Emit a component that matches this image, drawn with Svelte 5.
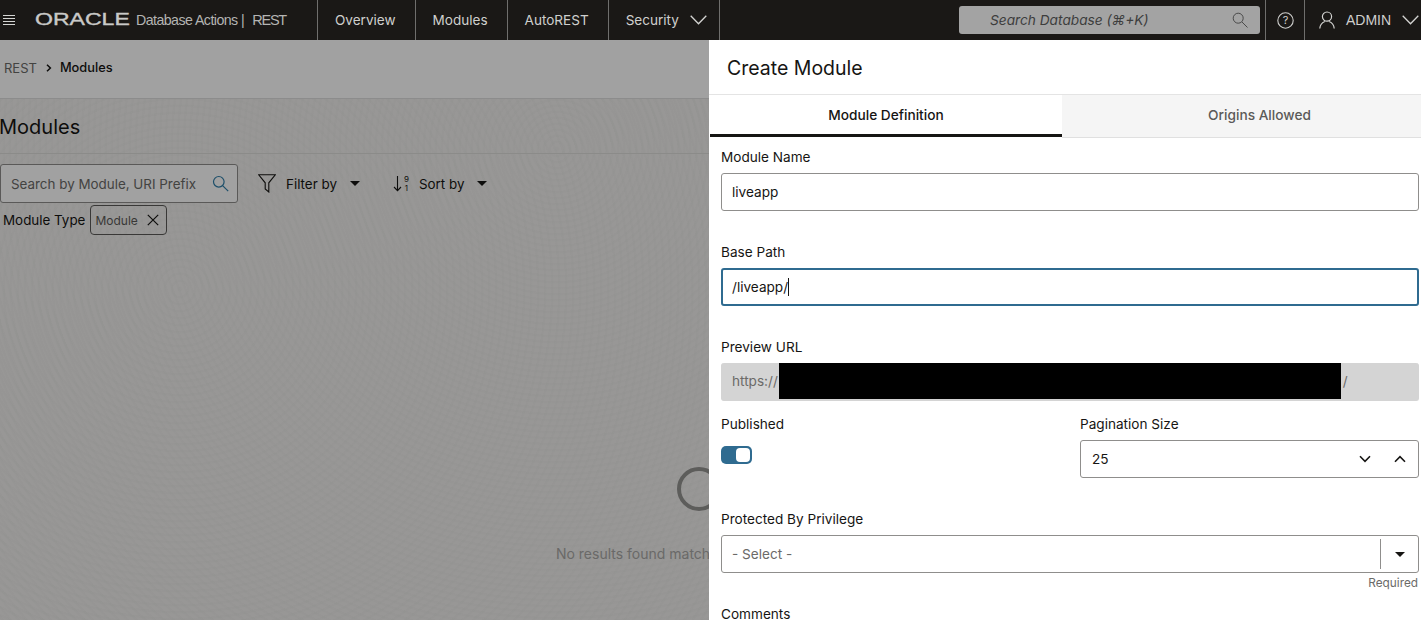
<script>
  const nav = ['Overview', 'Modules', 'AutoREST'];
</script>

<div class="app">
  <header class="topbar">
    <div class="brand">
      <svg class="burger" width="12" height="10" viewBox="0 0 12 10"><path d="M0 .5h12M0 3.5h12M0 6.5h12M0 9.5h12" stroke="#d4d4d2" stroke-width="1" /></svg>
      <span class="oracle">ORACLE</span>
      <span class="sub">Database Actions |</span>
      <span class="rest">REST</span>
    </div>
    <nav class="nav">
      {#each nav as item}
        <a class="navitem">{item}</a>
      {/each}
      <a class="navitem security">
        <span>Security</span>
        <svg width="17" height="10" viewBox="0 0 17 10"><path d="M.7.8 8.5 8.8 16.3.8" fill="none" stroke="#d4d4d2" stroke-width="1.3" /></svg>
      </a>
    </nav>
    <div class="spacer"></div>
    <div class="dbsearch">
      <span>Search Database (⌘+K)</span>
      <svg width="16" height="16" viewBox="0 0 16 16"><circle cx="6.2" cy="6.2" r="5" fill="none" stroke="#4a4a4a" stroke-width="1" /><path d="m10 10 5.5 5.5" stroke="#4a4a4a" stroke-width="1" /></svg>
    </div>
    <div class="help">
      <svg width="17" height="17" viewBox="0 0 17 17"><circle cx="8.5" cy="8.5" r="7.7" fill="none" stroke="#cfcfcd" stroke-width="1.1" /><text x="8.5" y="12.2" text-anchor="middle" class="q">?</text></svg>
    </div>
    <div class="user">
      <svg width="16" height="18" viewBox="0 0 16 18"><circle cx="8" cy="5.6" r="4.6" fill="none" stroke="#d4d4d2" stroke-width="1.2" /><path d="M.8 17.5c.3-4 2.7-6 5-7M15.2 17.5c-.3-4-2.700-6-5-7" fill="none" stroke="#d4d4d2" stroke-width="1.2" /></svg>
      <span>ADMIN</span>
      <svg width="17" height="10" viewBox="0 0 17 10"><path d="M.7.8 8.5 8.8 16.3.8" fill="none" stroke="#d4d4d2" stroke-width="1.3" /></svg>
    </div>
  </header>

  <main class="stage">
    <section class="page">
      <div class="crumbs">
        <span class="crumb-root">REST</span>
        <svg width="6" height="8" viewBox="0 0 6 8"><path d="M1 .7 4.400 4 1 7.300" fill="none" stroke="#161513" stroke-width="1.500" /></svg>
        <span class="crumb-current">Modules</span>
      </div>
      <div class="content">
        <h1>Modules</h1>
        <div class="tools">
          <div class="search">
            <span>Search by Module, URI Prefix</span>
            <svg width="17" height="17" viewBox="0 0 17 17"><circle cx="6.800" cy="6.800" r="5.300" fill="none" stroke="#2f7da8" stroke-width="1.200" /><path d="m10.600 10.600 5.600 5.600" stroke="#2f7da8" stroke-width="1.200" /></svg>
          </div>
          <div class="tool filter">
            <svg width="18" height="19" viewBox="0 0 18 19"><path d="M.7.8h16.600l-6.500 8v9.200l-3.600-3v-6.200z" fill="none" stroke="#161513" stroke-width="1.100" /></svg>
            <span>Filter by</span>
            <i class="caret"></i>
          </div>
          <div class="tool sort">
            <svg width="17" height="17" viewBox="0 0 17 17"><path d="M4.500 1v14.500M1 12l3.500 3.700L8 12" fill="none" stroke="#161513" stroke-width="1.100" /><text x="13.500" y="7" text-anchor="middle" class="digit">9</text><text x="13.500" y="16" text-anchor="middle" class="digit">1</text></svg>
            <span>Sort by</span>
            <i class="caret"></i>
          </div>
        </div>
        <div class="applied">
          <span>Module Type</span>
          <div class="chip">
            <span>Module</span>
            <svg width="12" height="12" viewBox="0 0 12 12"><path d="m.8.800 10.400 10.400M11.200.800.800 11.200" stroke="#161513" stroke-width="1.200" /></svg>
          </div>
        </div>
        <div class="empty">
          <div class="spinner"></div>
          <p>No results found matching your criteria</p>
        </div>
      </div>
      <div class="scrim"></div>
    </section>

    <aside class="drawer">
      <div class="drawer-head">Create Module</div>
      <div class="tabs">
        <div class="tab active">Module Definition</div>
        <div class="tab">Origins Allowed</div>
      </div>
      <div class="form">
        <div class="field">
          <div class="label">Module Name</div>
          <div class="input">liveapp</div>
        </div>
        <div class="field">
          <div class="label">Base Path</div>
          <div class="input focus">/liveapp/<i class="cursor"></i></div>
        </div>
        <div class="field tight">
          <div class="label">Preview URL</div>
          <div class="input readonly">
            <span>https://</span><i class="redact"></i><span class="slash">/</span>
          </div>
        </div>
        <div class="row">
          <div class="col">
            <div class="label">Published</div>
            <div class="switch"><i></i></div>
          </div>
          <div class="col">
            <div class="label">Pagination Size</div>
            <div class="input number">
              <span class="grow">25</span>
              <svg width="12" height="8" viewBox="0 0 12 8"><path d="M1 1.300 6 6.300l5-5" fill="none" stroke="#161513" stroke-width="1.600" /></svg>
              <svg width="12" height="8" viewBox="0 0 12 8"><path d="M1 6.700 6 1.700l5 5" fill="none" stroke="#161513" stroke-width="1.600" /></svg>
            </div>
          </div>
        </div>
        <div class="field last">
          <div class="label">Protected By Privilege</div>
          <div class="input select">
            <span class="grow placeholder">- Select -</span>
            <div class="select-btn"><i class="caret"></i></div>
          </div>
          <div class="hint">Required</div>
        </div>
        <div class="label">Comments</div>
      </div>
    </aside>
  </main>
</div>

<style>
  :global(body) { margin: 0; }
  .app {
    width: 1421px;
    height: 620px;
    overflow: hidden;
    font-family: Inter, "Noto Sans", sans-serif;
    font-size: 13.4px;
    color: #161513;
    display: flex;
    flex-direction: column;
  }
  .topbar {
    height: 40px;
    flex: none;
    background: #1a1816;
    color: #d4d4d2;
    display: flex;
    align-items: center;
  }
  .brand {
    width: 317px;
    flex: none;
    display: flex;
    align-items: center;
    font-family: "Liberation Sans", Arial, sans-serif;
    color: #b4b4b2;
  }
  .burger { margin-left: 3px; }
  .oracle {
    margin-left: 20px;
    width: 93px;
    font-size: 16px;
    font-weight: 400;
    -webkit-text-stroke: .35px #c9c9c7;
    color: #c9c9c7;
    transform: scaleX(1.44);
    transform-origin: left center;
  }
  .sub { margin-left: 8px; font-size: 14.2px; letter-spacing: -.55px; }
  .rest { margin-left: 8px; font-size: 14.5px; letter-spacing: -1.2px; }
  .nav { display: flex; height: 40px; }
  .navitem {
    display: flex;
    align-items: center;
    gap: 11px;
    padding: 0 19px 0 17px;
    border-left: 1px solid #6f6e6c;
    font-size: 13.55px;
    color: #cfcfcd;
  }
  .security { padding-right: 12px; border-right: 1px solid #6f6e6c; }
  .spacer { flex: 1; }
  .dbsearch {
    width: 301px;
    height: 28px;
    box-sizing: border-box;
    background: #a3a3a3;
    border-radius: 3px;
    display: flex;
    align-items: center;
    justify-content: space-between;
    padding: 0 12px 0 31px;
    font-size: 13.7px;
    font-style: italic;
    color: #3d3d3d;
  }
  .q { font: 11px Inter, sans-serif; fill: #cfcfcd; }
  .help {
    margin-left: 5px;
    width: 38px;
    height: 40px;
    display: flex;
    align-items: center;
    justify-content: center;
    border-left: 1px solid #6f6e6c;
    border-right: 1px solid #6f6e6c;
  }
  .user {
    width: 116px;
    display: flex;
    align-items: center;
    padding-left: 14px;
    box-sizing: border-box;
    font-family: "Liberation Sans", Arial, sans-serif;
    font-size: 14px;
    color: #cfcfcd;
  }
  .user span { margin: 0 11px; }

  .stage { flex: 1; position: relative; overflow: hidden; min-height: 0; }
  .page { position: relative; width: 1398px; height: 100%; background: #fff; }
  .crumbs {
    height: 59px;
    box-sizing: border-box;
    border-bottom: 1px solid #dedede;
    padding: 0 0 3px 4px;
    display: flex;
    align-items: center;
    gap: 9px;
    font-size: 13px;
  }
  .crumb-root { color: #6b6a68; }
  .crumb-current { font-size: 12.8px; font-weight: 500; margin-left: -1px; }
  .content {
    height: 521px;
    background-color: #f1f0ee;
    background-image:
      repeating-radial-gradient(circle at 557px 50px, rgba(0,0,0,.012) 0 2px, transparent 3px 6px),
      repeating-radial-gradient(circle at 180px 190px, rgba(0,0,0,.01) 0 2px, transparent 3px 7px);
  }
  h1 {
    margin: 0;
    height: 55px;
    box-sizing: border-box;
    border-bottom: 1px solid #dddcda;
    font-size: 20px;
    font-weight: 400;
    line-height: 56px;
    text-indent: -1px;
  }
  .tools {
    display: flex;
    align-items: center;
    margin-top: 10px;
    height: 39px;
  }
  .search {
    width: 238px;
    height: 39px;
    box-sizing: border-box;
    border: 1px solid #8f8e8c;
    border-radius: 3px;
    background: #fff;
    display: flex;
    align-items: center;
    justify-content: space-between;
    padding: 0 8px 0 10px;
    color: #6b6a68;
  }
  .tool { display: flex; align-items: center; }
  .filter { margin-left: 20px; }
  .filter span { margin: 0 13px 0 10px; }
  .sort { margin-left: 33px; }
  .sort span { margin: 0 13px 0 9px; }
  .digit { font: 8px Inter, sans-serif; fill: #161513; }
  .caret {
    display: block;
    width: 0;
    height: 0;
    border-left: 5px solid transparent;
    border-right: 5px solid transparent;
    border-top: 5px solid #161513;
  }
  .applied {
    display: flex;
    align-items: center;
    gap: 5px;
    padding-left: 3px;
    margin-top: 2px;
  }
  .chip {
    width: 77px;
    height: 30px;
    box-sizing: border-box;
    border: 1px solid #5b5a58;
    border-radius: 4px;
    display: flex;
    align-items: center;
    justify-content: space-between;
    padding: 0 7px 0 4px;
    font-size: 12px;
    color: #5b5a58;
  }
  .empty {
    display: flex;
    flex-direction: column;
    align-items: center;
    margin-top: 232px;
  }
  .spinner {
    width: 44px;
    height: 44px;
    box-sizing: border-box;
    border: 4px solid #949391;
    border-radius: 50%;
  }
  .empty p { margin: 34px 0 0; padding-right: 28px; font-size: 14px; color: #a8a7a5; }
  .scrim {
    position: absolute;
    inset: 0;
    width: 1421px;
    background: rgba(0,0,0,.37);
  }

  .drawer {
    position: absolute;
    top: 0;
    right: 0;
    bottom: 0;
    width: 712px;
    background: #fff;
    overflow: hidden;
    font-size: 13.6px;
  }
  .drawer-head {
    height: 55px;
    box-sizing: border-box;
    border-bottom: 1px solid #e4e4e4;
    padding-left: 18px;
    font-size: 19.5px;
    line-height: 56px;
  }
  .tabs { display: flex; height: 43px; }
  .tab {
    flex: none;
    width: 395px;
    height: 43px;
    display: flex;
    align-items: center;
    justify-content: center;
    padding-bottom: 2px;
    box-sizing: border-box;
    background: #f5f5f5;
    border-bottom: 1px solid #e0e0e0;
    font-size: 13.7px;
    font-weight: 500;
    color: #5b5a58;
  }
  .tab.active {
    width: 352px;
    margin-left: 1px;
    height: 42px;
    padding-bottom: 0;
    background: #fff;
    border-bottom: 3px solid #161513;
    color: #161513;
  }
  .form { padding: 9px 2px 0 12px; }
  .label { height: 26px; line-height: 18px; padding-top: 1px; box-sizing: border-box; }
  .field { margin-bottom: 31px; }
  .field.tight { margin-bottom: 13px; }
  .field.last { margin-bottom: 0; }
  .input {
    height: 38px;
    box-sizing: border-box;
    border: 1px solid #8f8e8c;
    border-radius: 3px;
    display: flex;
    align-items: center;
    padding: 0 10px;
    background: #fff;
  }
  .focus { border: 2px solid #2f6b90; padding-left: 9px; }
  .cursor { display: block; width: 1px; height: 18px; background: #161513; }
  .readonly {
    background: #d4d4d4;
    border-color: #d4d4d4;
    color: #6b6a68;
    align-items: flex-start;
    line-height: 37px;
    border-top: 0;
    padding-top: 0;
  }
  .redact { display: block; width: 562px; height: 36px; background: #000; flex: none; margin-left: 1px; }
  .slash { margin-left: 2px; }
  .row { display: flex; height: 64px; margin-bottom: 31px; }
  .col { width: 359px; }
  .col + .col { flex: 1; }
  .switch {
    width: 31px;
    height: 18px;
    margin-top: 6px;
    box-sizing: border-box;
    background: #2f6b90;
    border-radius: 5px;
    padding: 2px;
    display: flex;
    justify-content: flex-end;
  }
  .switch i { display: block; width: 14px; height: 14px; background: #fff; border-radius: 4px; }
  .grow { flex: 1; }
  .number { gap: 23px; padding: 0 12px 0 11px; }
  .select { padding-right: 0; }
  .placeholder { color: #6b6a68; }
  .select-btn {
    width: 37px;
    height: 30px;
    border-left: 1px solid #8f8e8c;
    display: flex;
    align-items: center;
    justify-content: center;
  }
  .hint { text-align: right; font-size: 11.8px; color: #6b6a68; line-height: 21px; height: 31px; padding-right: 1px; }
</style>
